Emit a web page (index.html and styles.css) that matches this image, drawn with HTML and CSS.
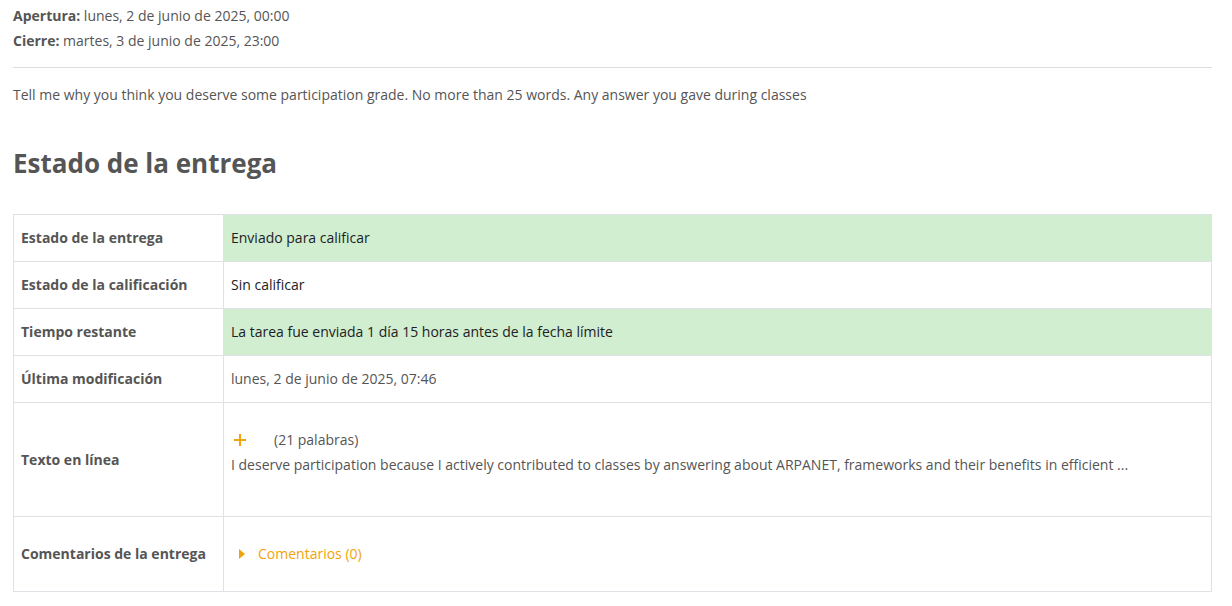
FILE: index.html
```html
<!DOCTYPE html>
<html lang="es">
<head>
<meta charset="utf-8">
<title>Estado de la entrega</title>
<link rel="stylesheet" href="styles.css">
</head>
<body>
<div class="page">
  <div class="dates">
    <div class="date-line"><strong>Apertura:</strong> lunes, 2 de junio de 2025, 00:00</div>
    <div class="date-line"><strong>Cierre:</strong> martes, 3 de junio de 2025, 23:00</div>
  </div>
  <hr class="sep">
  <p class="intro">Tell me why you think you deserve some participation grade. No more than 25 words. Any answer you gave during classes</p>
  <h2 class="title">Estado de la entrega</h2>
  <table class="status">
    <tr class="ok">
      <th>Estado de la entrega</th>
      <td class="dark">Enviado para calificar</td>
    </tr>
    <tr>
      <th>Estado de la calificación</th>
      <td class="dark">Sin calificar</td>
    </tr>
    <tr class="ok">
      <th>Tiempo restante</th>
      <td class="dark">La tarea fue enviada 1 día 15 horas antes de la fecha límite</td>
    </tr>
    <tr>
      <th>Última modificación</th>
      <td>lunes, 2 de junio de 2025, 07:46</td>
    </tr>
    <tr>
      <th>Texto en línea</th>
      <td>
        <div class="online">
          <div class="summary-line">
            <span class="plus"><svg width="12" height="12" viewBox="0 0 12 12"><path d="M6 0V12M0 6H12" stroke="#f0a30a" stroke-width="2" fill="none"/></svg></span>
            <span class="words">(21 palabras)</span>
          </div>
          <div class="excerpt">I deserve participation because I actively contributed to classes by answering about ARPANET, frameworks and their benefits in efficient ...</div>
        </div>
      </td>
    </tr>
    <tr>
      <th>Comentarios de la entrega</th>
      <td>
        <div class="comments">
          <span class="caret"><svg width="6" height="10" viewBox="0 0 6 10"><path d="M0 0L6 5L0 10Z" fill="#f0a30a"/></svg></span>
          <span class="comments-link">Comentarios (0)</span>
        </div>
      </td>
    </tr>
  </table>
</div>
</body>
</html>
```
FILE: styles.css
```css
html, body {
  margin: 0;
  padding: 0;
  background: #fff;
}
body {
  font-family: "Open Sans", "Liberation Sans", sans-serif;
  font-size: 14px;
  color: #555;
}
.page {
  padding: 5px 20px 0 13px;
}
.dates {
  display: flex;
  flex-direction: column;
  gap: 4px;
}
.date-line {
  line-height: 21px;
}
.date-line strong {
  font-weight: 700;
}
.sep {
  border: 0;
  border-top: 1px solid #ddd;
  margin: 16px 0 0 0;
}
.intro {
  margin: 16px 0 0 0;
  line-height: 21px;
}
.title {
  margin: 41px 0 0 0;
  font-size: 26px;
  line-height: 34px;
  font-weight: 700;
  color: #555;
}
.status {
  margin-top: 34px;
  width: 100%;
  border-collapse: collapse;
  border: 1px solid #dee2e6;
}
.status th, .status td {
  border: 1px solid #dee2e6;
  padding: 12px 7px;
  line-height: 22px;
  vertical-align: middle;
  text-align: left;
}
.status th {
  width: 195px;
  font-weight: 700;
  color: #555;
}
.status tr.ok td {
  background: #d1eed0;
}
.status td.dark {
  color: #1d2125;
}
.online {
  margin: 14px 0 28px 0;
}
.summary-line {
  display: flex;
  align-items: center;
  height: 22px;
}
.plus {
  display: flex;
  margin-left: 3px;
  width: 40px;
}
.excerpt {
  margin-top: 3px;
}
.comments {
  display: flex;
  align-items: center;
  height: 50px;
}
.caret {
  display: flex;
  margin-left: 8px;
  width: 19px;
}
.comments-link {
  color: #f0a30a;
}
```
